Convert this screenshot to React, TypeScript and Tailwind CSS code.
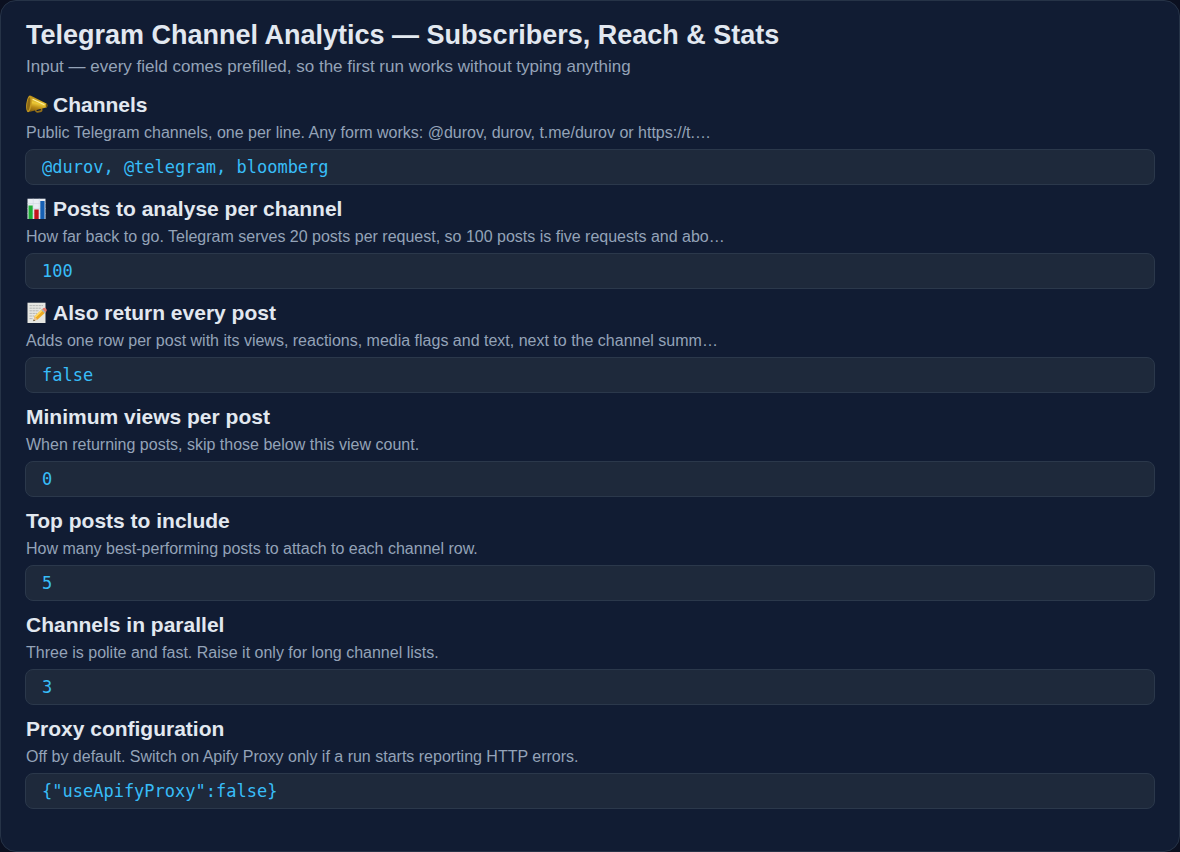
import { useId, useState } from "react";
import type { ReactNode } from "react";

function MegaphoneIcon() {
  return (
    <svg viewBox="0 0 22 22" className="h-[22px] w-[22px]" aria-hidden="true">
      <defs>
        <linearGradient id="horn" x1="0" y1="0" x2="-0.25" y2="1">
          <stop offset="0" stopColor="#b58a14" />
          <stop offset="0.35" stopColor="#ecc936" />
          <stop offset="0.6" stopColor="#b98a16" />
          <stop offset="1" stopColor="#6f500c" />
        </linearGradient>
      </defs>
      <path d="M9 14 10 17Q10.4 18 11.6 17.9L15 17.2Q16 16.8 15.6 15.2L15.2 13.6" fill="none" stroke="#94701a" strokeWidth="1.7" />
      <path d="M4.5 1.6 20.4 9.6Q21.8 11 21 13.2L3.2 18Z" fill="url(#horn)" />
      <ellipse cx="3" cy="9.8" rx="2.7" ry="8.4" transform="rotate(7 3 9.8)" fill="#c79b22" />
      <ellipse cx="2.7" cy="10" rx="1.5" ry="6.8" transform="rotate(7 2.7 10)" fill="#8d6a14" />
      <path d="M6.6 5.2 18.4 10.8" stroke="#fff0a0" strokeWidth="1.1" />
      <ellipse cx="20.6" cy="11.4" rx="0.9" ry="1.9" fill="#77560f" />
    </svg>
  );
}

function ChartIcon() {
  return (
    <svg viewBox="0 0 22 22" className="h-[22px] w-[22px]" aria-hidden="true">
      <path d="M1.5 0.7H19.5V21H1.5Z" fill="#e9edf3" />
      <path d="M1.5 5.5H19.5M1.5 10.5H19.5M1.5 15.5H19.5M7.2 0.7V21M13.2 0.7V21" stroke="#cfd8e2" strokeWidth="0.6" />
      <path d="M2.5 7.5H6.7V21H2.5Z" fill="#1fae35" />
      <path d="M8.3 11.5H12.7V21H8.3Z" fill="#c3141c" />
      <path d="M14.3 3H18.6V21H14.3Z" fill="#155fb4" />
    </svg>
  );
}

function MemoIcon() {
  return (
    <svg viewBox="0 0 22 22" className="h-[22px] w-[22px]" aria-hidden="true">
      <path d="M1.5 0.7H19.5V21H1.5Z" fill="#e6e6e2" />
      <path d="M3.5 3.6H17M3.5 6.2H15M3.5 8.8H13M3.5 11.4H11M3.5 14H8.6M3.5 16.6H7" stroke="#a6a8a7" strokeWidth="0.8" strokeDasharray="2.4 0.6" />
      <path d="m7.5 19 1-4.4 7.8-7.6 3.3 3.2-8 7.4Z" fill="#eda920" />
      <path d="m8.5 14.6 7.8-7.6 1.2 1.1-7.9 7.7Z" fill="#ffda62" />
      <path d="M15.9 7.4 17.4 6Q18.6 5.2 19.8 6.3T20.7 9L19.2 10.6Z" fill="#e77b6c" />
      <path d="m15.2 8.1 1.1-1.1 3.3 3.2-1.1 1Z" fill="#aeb5b8" />
      <path d="m7.5 19 1-4.4 3.1 3Z" fill="#e9c393" />
      <path d="m7.3 19.2.5-1.7 1.2 1.1Z" fill="#333" />
    </svg>
  );
}

type FieldProps = {
  icon?: ReactNode;
  title: string;
  description: string;
  initial: string;
};

const fields: FieldProps[] = [
  {
    icon: <MegaphoneIcon />,
    title: "Channels",
    description: "Public Telegram channels, one per line. Any form works: @durov, durov, t.me/durov or https://t.…",
    initial: "@durov, @telegram, bloomberg",
  },
  {
    icon: <ChartIcon />,
    title: "Posts to analyse per channel",
    description: "How far back to go. Telegram serves 20 posts per request, so 100 posts is five requests and abo…",
    initial: "100",
  },
  {
    icon: <MemoIcon />,
    title: "Also return every post",
    description: "Adds one row per post with its views, reactions, media flags and text, next to the channel summ…",
    initial: "false",
  },
  {
    title: "Minimum views per post",
    description: "When returning posts, skip those below this view count.",
    initial: "0",
  },
  {
    title: "Top posts to include",
    description: "How many best-performing posts to attach to each channel row.",
    initial: "5",
  },
  {
    title: "Channels in parallel",
    description: "Three is polite and fast. Raise it only for long channel lists.",
    initial: "3",
  },
  {
    title: "Proxy configuration",
    description: "Off by default. Switch on Apify Proxy only if a run starts reporting HTTP errors.",
    initial: '{"useApifyProxy":false}',
  },
];

function Field({ icon, title, description, initial }: FieldProps) {
  const id = useId();
  const [value, setValue] = useState(initial);
  return (
    <div className="flex flex-col">
      <label htmlFor={id} className="flex items-center gap-[5px] px-px text-[21px] leading-7 font-bold text-[#e2e8f0]">
        {icon}
        {title}
      </label>
      <p id={`${id}-help`} className="mt-1 px-px text-base leading-5 text-[#94a3b8]">
        {description}
      </p>
      <input
        id={id}
        type="text"
        spellCheck={false}
        aria-describedby={`${id}-help`}
        value={value}
        onChange={(event) => setValue(event.target.value)}
        className="mt-1.5 h-9 w-full rounded-lg border border-[#2b384b] bg-[#1e293b] px-4 font-['DejaVu_Sans_Mono',monospace] text-[17px] text-[#38bdf8] outline-none focus:border-[#38bdf8]"
      />
    </div>
  );
}

export default function App() {
  return (
    <div className="min-h-screen bg-[#0b1020] font-['Liberation_Sans',Arial,sans-serif]">
      <main className="flex min-h-screen flex-col rounded-2xl border border-[#263347] bg-[#111c33] px-6 pt-4 pb-10">
        <header className="px-px">
          <h1 className="text-[27px] leading-9 font-bold text-[#e2e8f0]">
            Telegram Channel Analytics — Subscribers, Reach &amp; Stats
          </h1>
          <p className="mt-1 text-[17px] leading-5 text-[#94a3b8]">
            Input — every field comes prefilled, so the first run works without typing anything
          </p>
        </header>
        <form className="mt-3.5 flex flex-col gap-2.5" onSubmit={(event) => event.preventDefault()}>
          {fields.map((field) => (
            <Field key={field.title} {...field} />
          ))}
        </form>
      </main>
    </div>
  );
}
